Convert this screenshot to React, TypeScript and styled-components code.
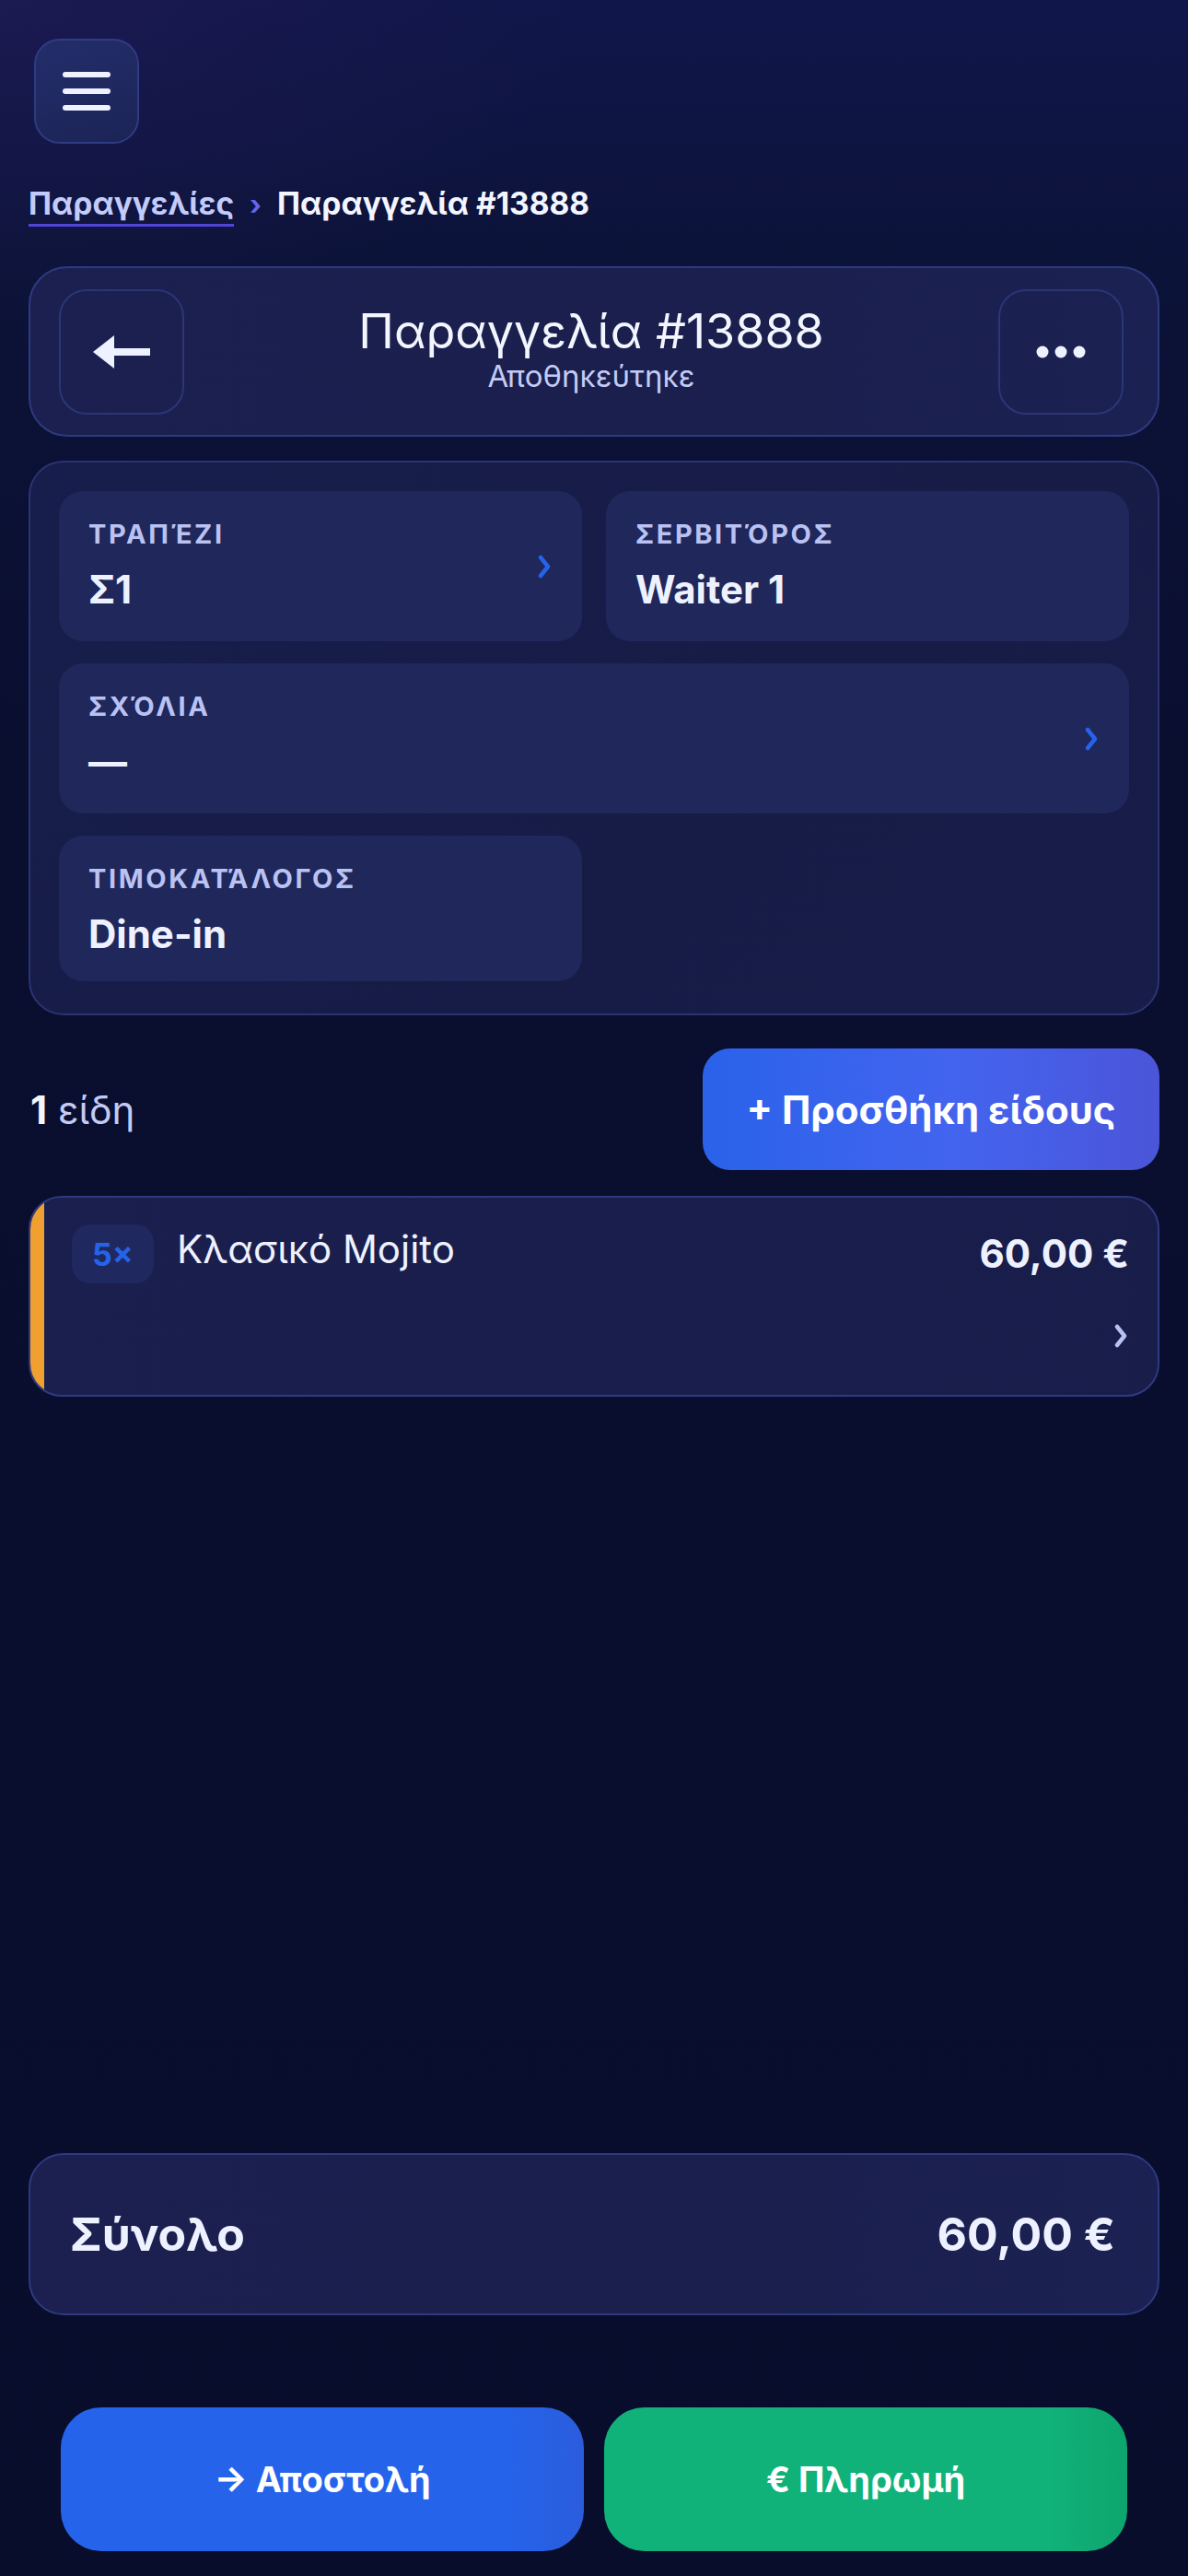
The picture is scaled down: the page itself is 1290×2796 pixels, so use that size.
import React from 'react';
import styled, { createGlobalStyle } from 'styled-components';

const GlobalStyle = createGlobalStyle`
    html, body {
        margin: 0;
        padding: 0;
        background: #080d2c;
    }
    * {
        box-sizing: border-box;
    }
    body {
        font-family: Inter, 'Liberation Sans', sans-serif;
        color: #eef1ff;
    }
`;

const Chevron = ({ color }: { color: string }) => (
    <svg width="14" height="28" viewBox="0 0 14 28">
        <path
            d="M3 4 L11 14 L3 24"
            fill="none"
            stroke={color}
            strokeWidth="4.5"
            strokeLinecap="round"
            strokeLinejoin="round"
        />
    </svg>
);

const App = () => {
    return (
        <Page>
            <GlobalStyle />
            <MenuButton aria-label="menu">
                <MenuLine />
                <MenuLine />
                <MenuLine />
            </MenuButton>

            <Breadcrumb>
                <CrumbLink>Παραγγελίες</CrumbLink>
                <CrumbSep>›</CrumbSep>
                <CrumbCurrent>Παραγγελία #13888</CrumbCurrent>
            </Breadcrumb>

            <HeaderCard>
                <SquareButton aria-label="back">
                    <svg width="62" height="36" viewBox="0 0 62 36">
                        <polygon points="0,18 23,0 23,36" fill="#eef1ff" />
                        <rect x="20" y="14" width="42" height="8" fill="#eef1ff" />
                    </svg>
                </SquareButton>
                <HeaderText>
                    <HeaderTitle>Παραγγελία #13888</HeaderTitle>
                    <HeaderSub>Αποθηκεύτηκε</HeaderSub>
                </HeaderText>
                <SquareButton aria-label="more">
                    <svg width="54" height="14" viewBox="0 0 54 14">
                        <circle cx="7" cy="7" r="6.5" fill="#eef1ff" />
                        <circle cx="27" cy="7" r="6.5" fill="#eef1ff" />
                        <circle cx="47" cy="7" r="6.5" fill="#eef1ff" />
                    </svg>
                </SquareButton>
            </HeaderCard>

            <InfoPanel>
                <Tile>
                    <TileText>
                        <TileLabel>Τραπέζι</TileLabel>
                        <TileValue>Σ1</TileValue>
                    </TileText>
                    <Chevron color="#2563eb" />
                </Tile>
                <Tile>
                    <TileText>
                        <TileLabel>Σερβιτόρος</TileLabel>
                        <TileValue>Waiter 1</TileValue>
                    </TileText>
                </Tile>
                <Tile $wide>
                    <TileText>
                        <TileLabel>Σχόλια</TileLabel>
                        <TileValue>—</TileValue>
                    </TileText>
                    <Chevron color="#2563eb" />
                </Tile>
                <Tile $short>
                    <TileText>
                        <TileLabel>Τιμοκατάλογος</TileLabel>
                        <TileValue>Dine-in</TileValue>
                    </TileText>
                </Tile>
            </InfoPanel>

            <ItemsBar>
                <ItemsCount>
                    <strong>1</strong> είδη
                </ItemsCount>
                <AddButton>+ Προσθήκη είδους</AddButton>
            </ItemsBar>

            <ItemCard>
                <Accent />
                <ItemBody>
                    <ItemRow>
                        <QtyBadge>5×</QtyBadge>
                        <ItemName>Κλασικό Mojito</ItemName>
                        <ItemPrice>60,00 €</ItemPrice>
                    </ItemRow>
                    <ItemFooter>
                        <Chevron color="#b9c1f0" />
                    </ItemFooter>
                </ItemBody>
            </ItemCard>

            <TotalCard>
                <TotalLabel>Σύνολο</TotalLabel>
                <TotalValue>60,00 €</TotalValue>
            </TotalCard>

            <ActionBar>
                <ActionButton $variant="send">→ Αποστολή</ActionButton>
                <ActionButton $variant="pay">€ Πληρωμή</ActionButton>
            </ActionBar>
        </Page>
    );
};

const Page = styled.div`
    min-height: 2796px;
    display: flex;
    flex-direction: column;
    padding: 42px 31px 27px;
    background:
        radial-gradient(ellipse 900px 500px at 0% 0%, rgba(40, 30, 90, 0.45), transparent 70%),
        linear-gradient(180deg, #10164a 0px, #0c1338 300px, #0a0f30 800px, #080d2c 100%);
`;

const MenuButton = styled.button`
    width: 114px;
    height: 114px;
    margin-left: 6px;
    border-radius: 28px;
    border: 2px solid #2f3b82;
    background: linear-gradient(160deg, #232d6a, #1c2456);
    display: flex;
    flex-direction: column;
    align-items: center;
    justify-content: center;
    gap: 12px;
    padding: 0;
`;

const MenuLine = styled.span`
    display: block;
    width: 52px;
    height: 6px;
    border-radius: 3px;
    background: #eef1ff;
`;

const Breadcrumb = styled.nav`
    margin-top: 46px;
    display: flex;
    align-items: baseline;
    gap: 17px;
    font-size: 33.5px;
    line-height: 38px;
    font-weight: 700;
`;

const CrumbLink = styled.span`
    color: #c3cbfa;
    text-decoration: underline;
    text-decoration-color: #4f46d8;
    text-decoration-thickness: 3px;
    text-underline-offset: 10px;
`;

const CrumbSep = styled.span`
    color: #6366f1;
    font-size: 30px;
`;

const CrumbCurrent = styled.span`
    color: #f3f5ff;
`;

const HeaderCard = styled.header`
    margin-top: 48px;
    height: 185px;
    display: grid;
    grid-template-columns: 136px 1fr 136px;
    align-items: center;
    padding: 0 37px 0 31px;
    border: 2px solid #2e3a80;
    border-radius: 42px;
    background: linear-gradient(90deg, #1b2050, #1a1f4d 60%, #1b2152);
`;

const SquareButton = styled.button`
    width: 136px;
    height: 136px;
    border-radius: 30px;
    border: 2px solid #2b3677;
    background: transparent;
    display: flex;
    align-items: center;
    justify-content: center;
    padding: 0;
`;

const HeaderText = styled.div`
    display: flex;
    flex-direction: column;
    align-items: center;
    margin-top: -8px;
`;

const HeaderTitle = styled.h1`
    margin: 0;
    font-size: 52px;
    line-height: 60px;
    font-weight: 400;
    color: #f3f5ff;
`;

const HeaderSub = styled.div`
    font-size: 33px;
    line-height: 36px;
    color: #c3cbf5;
`;

const InfoPanel = styled.section`
    margin-top: 26px;
    padding: 31px 31px 35px;
    border: 2px solid #2a3472;
    border-radius: 38px;
    background: linear-gradient(135deg, #181e4b, #161c46 60%, #171d48);
    display: grid;
    grid-template-columns: 1fr 1fr;
    align-items: start;
    column-gap: 26px;
    row-gap: 24px;
`;

const Tile = styled.div<{ $wide?: boolean; $short?: boolean }>`
    grid-column: ${({ $wide }) => ($wide ? '1 / span 2' : 'auto')};
    height: ${({ $short }) => ($short ? '158px' : '163px')};
    padding: 30px 34px 30px 32px;
    border-radius: 26px;
    background: #1f275b;
    display: flex;
    align-items: center;
    justify-content: space-between;
`;

const TileText = styled.div`
    display: flex;
    flex-direction: column;
    gap: 18px;
    align-self: flex-start;
`;

const TileLabel = styled.div`
    font-size: 29px;
    line-height: 34px;
    font-weight: 700;
    letter-spacing: 2.6px;
    text-transform: uppercase;
    color: #b9c2f2;
`;

const TileValue = styled.div`
    font-size: 42px;
    line-height: 50px;
    font-weight: 700;
    color: #eef1ff;
`;

const ItemsBar = styled.div`
    margin-top: 36px;
    display: flex;
    align-items: center;
    justify-content: space-between;
`;

const ItemsCount = styled.div`
    padding-left: 2px;
    font-size: 42px;
    color: #c3cbf5;

    strong {
        color: #f3f5ff;
        font-weight: 700;
    }
`;

const AddButton = styled.button`
    width: 496px;
    height: 132px;
    border: none;
    border-radius: 30px;
    background: linear-gradient(90deg, #2a62ea 0%, #4364ef 55%, #4b55d9 100%);
    color: #ffffff;
    font-family: inherit;
    font-size: 42px;
    font-weight: 700;
`;

const ItemCard = styled.article`
    margin-top: 28px;
    display: flex;
    border: 2px solid #2e3a80;
    border-radius: 36px;
    overflow: hidden;
    background: linear-gradient(90deg, #1a1f4e, #181d4a);
`;

const Accent = styled.div`
    flex: 0 0 15px;
    background: #f0a030;
`;

const ItemBody = styled.div`
    flex: 1;
    padding: 29px 31px 50px 30px;
`;

const ItemRow = styled.div`
    display: flex;
    align-items: flex-start;
    gap: 25px;
`;

const QtyBadge = styled.span`
    width: 89px;
    height: 64px;
    border-radius: 20px;
    background: #20295f;
    color: #2563eb;
    font-size: 34px;
    font-weight: 700;
    display: flex;
    align-items: center;
    justify-content: center;
`;

const ItemName = styled.div`
    flex: 1;
    font-size: 42px;
    line-height: 53px;
    color: #eef1ff;
`;

const ItemPrice = styled.div`
    margin-top: 5px;
    font-size: 42px;
    line-height: 53px;
    font-weight: 700;
    color: #eef1ff;
`;

const ItemFooter = styled.div`
    margin-top: 43px;
    display: flex;
    justify-content: flex-end;
    padding-right: 2px;
`;

const TotalCard = styled.section`
    margin-top: auto;
    height: 176px;
    padding: 0 46px 0 43px;
    border: 2px solid #2e3a80;
    border-radius: 38px;
    background: linear-gradient(90deg, #1b2050, #1a1f4d 60%, #1b2152);
    display: flex;
    align-items: center;
    justify-content: space-between;
`;

const TotalLabel = styled.div`
    font-size: 50px;
    font-weight: 700;
    color: #eef1ff;
`;

const TotalValue = styled.div`
    font-size: 50px;
    font-weight: 700;
    color: #eef1ff;
`;

const ActionBar = styled.div`
    margin-top: 100px;
    padding: 0 35px;
    display: grid;
    grid-template-columns: 1fr 1fr;
    gap: 22px;
`;

const ActionButton = styled.button<{ $variant: 'send' | 'pay' }>`
    height: 156px;
    border: none;
    border-radius: 44px;
    background: ${({ $variant }) =>
        $variant === 'send'
            ? 'linear-gradient(90deg, #2563eb 0%, #2563eb 85%, #2a5ddc 100%)'
            : 'linear-gradient(90deg, #10b27a 0%, #10b27a 85%, #0ea56e 100%)'};
    color: #ffffff;
    font-family: inherit;
    font-size: 38px;
    font-weight: 700;
`;

export default App;
